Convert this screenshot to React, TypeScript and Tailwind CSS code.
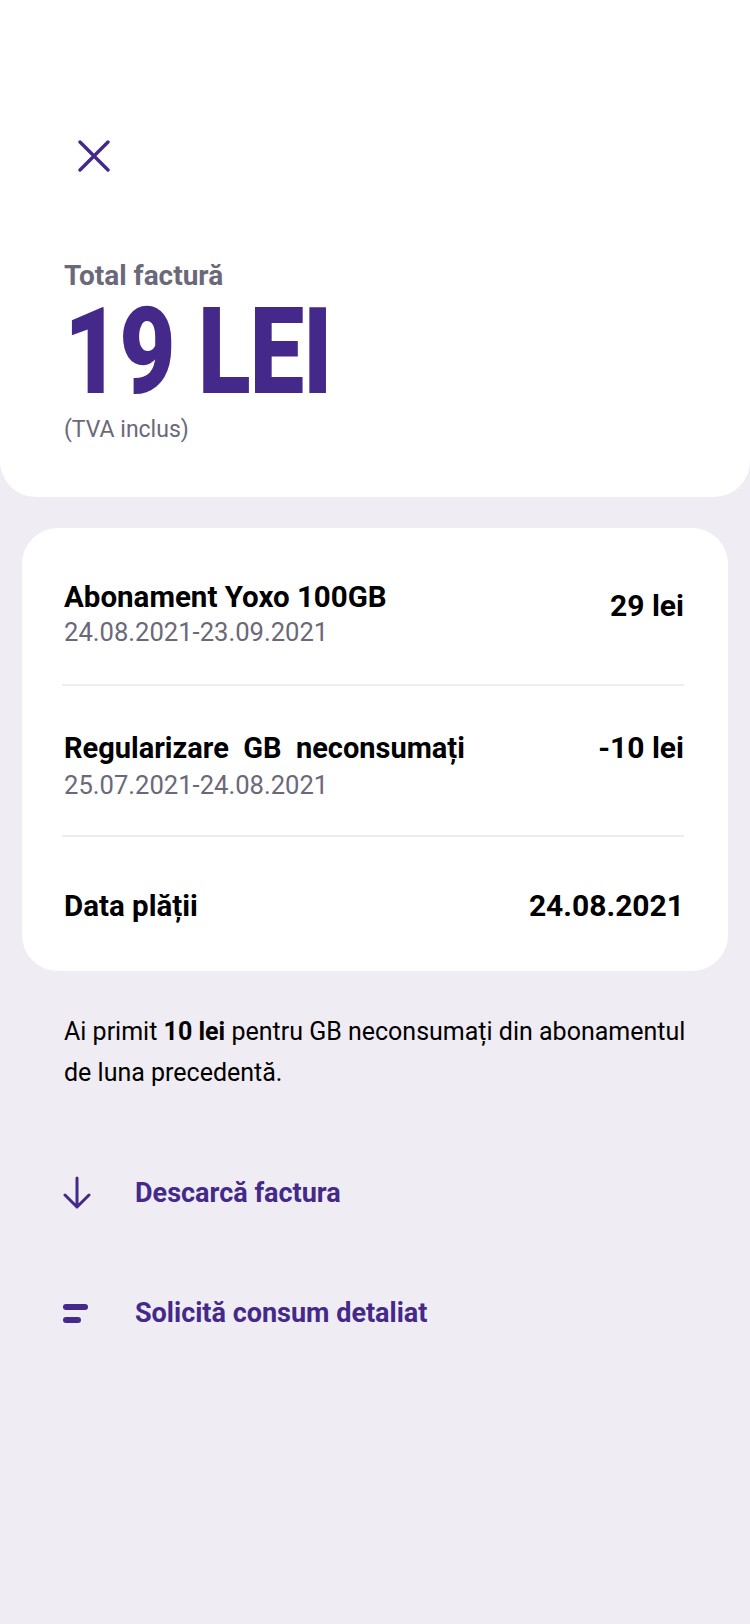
import React from "react";

const PURPLE = "text-[#44298a]";

const CloseIcon = () => (
  <svg width="32" height="32" viewBox="0 0 32 32" fill="none" className="ml-[14px]">
    <path d="M2 2 L30 30 M30 2 L2 30" stroke="#44298a" strokeWidth="3.4" strokeLinecap="round" />
  </svg>
);

const ArrowDownIcon = () => (
  <svg width="28" height="34" viewBox="0 0 28 34" fill="none">
    <path d="M14 2 V31 M2 19 L14 31 L26 19" stroke="#44298a" strokeWidth="3" strokeLinecap="round" strokeLinejoin="round" />
  </svg>
);

const LinesIcon = () => (
  <div className="flex flex-col gap-[7px] w-[28px]">
    <div className="h-[6px] w-[25px] rounded-full bg-[#44298a]" />
    <div className="h-[6px] w-[18px] rounded-full bg-[#44298a]" />
  </div>
);

const Divider = () => <div className="h-[2px] bg-[#eeecf2]" />;

export default function App() {
  return (
    <div className="min-h-[1624px] bg-[#efedf3] font-['Roboto',sans-serif]">
      {/* header card */}
      <div className="bg-white rounded-b-[36px] pt-[140px] pb-[52px] pl-[64px]">
        <CloseIcon />
        <div className="mt-[88px] text-[28px] leading-[32px] font-bold text-[#6b6879]">Total factură</div>
        <div className={`${PURPLE} text-[120px] leading-[120px] font-black tracking-[-0.01em] inline-block origin-left scale-x-[0.81]`}>
          19 LEI
        </div>
        <div className="mt-[3px] text-[23px] leading-[30px] text-[#6b6879]">(TVA inclus)</div>
      </div>

      {/* invoice lines */}
      <div className="mx-[22px] mt-[31px] bg-white rounded-[36px] pl-[40px] pr-[44px] text-black">
        <div className="flex justify-between pt-[51px] pb-[36px] pl-[2px]">
          <div>
            <div className="text-[29.5px] leading-[36px] font-bold">Abonament Yoxo 100GB</div>
            <div className="mt-[1px] text-[25.6px] leading-[32px] text-[#6b6879]">24.08.2021-23.09.2021</div>
          </div>
          <div className="mt-[9px] text-[30px] leading-[36px] font-bold">29 lei</div>
        </div>
        <Divider />
        <div className="flex justify-between pt-[44px] pb-[34px] pl-[2px]">
          <div>
            <div className="text-[29px] leading-[36px] font-bold whitespace-pre">Regularizare  GB  neconsumați</div>
            <div className="mt-[3px] text-[25.6px] leading-[32px] text-[#6b6879]">25.07.2021-24.08.2021</div>
          </div>
          <div className="text-[30px] leading-[36px] font-bold">-10 lei</div>
        </div>
        <Divider />
        <div className="flex justify-between pt-[51px] pb-[47px] pl-[2px]">
          <div className="text-[29.5px] leading-[36px] font-bold">Data plății</div>
          <div className="text-[30px] leading-[36px] font-bold">24.08.2021</div>
        </div>
      </div>

      <p className="mt-[40px] px-[64px] text-[25px] leading-[41px] text-black">
        Ai primit <span className="font-bold">10 lei</span> pentru GB neconsumați din abonamentul de luna precedentă.
      </p>

      <div className="mt-[83px] pl-[63px] flex flex-col gap-[86px]">
        <div className="flex items-center gap-[44px]">
          <ArrowDownIcon />
          <span className={`${PURPLE} text-[27px] leading-[34px] font-bold`}>Descarcă factura</span>
        </div>
        <div className="flex items-center gap-[44px]">
          <LinesIcon />
          <span className={`${PURPLE} text-[27px] leading-[34px] font-bold`}>Solicită consum detaliat</span>
        </div>
      </div>
    </div>
  );
}
